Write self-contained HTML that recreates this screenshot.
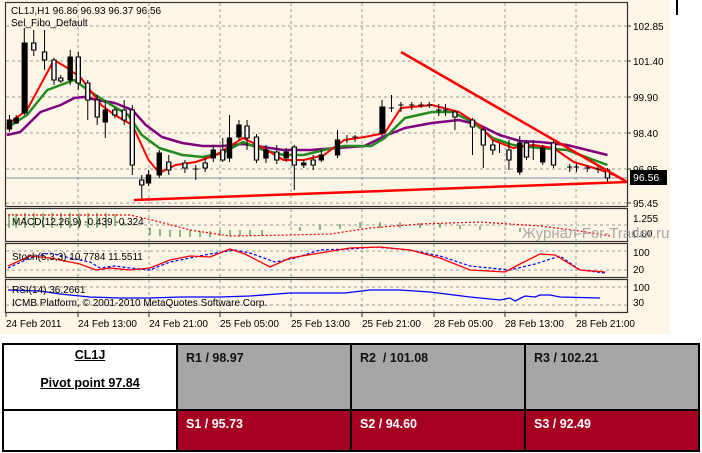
<!DOCTYPE html>
<html><head><meta charset="utf-8"><style>
body{margin:0;width:702px;height:453px;background:#fff;overflow:hidden;font-family:"Liberation Sans",sans-serif;position:relative}
svg{position:absolute;left:0;top:0}
table{position:absolute;left:2px;top:343px;width:698px;height:109px;border-collapse:collapse;table-layout:fixed}
td{border:2px solid #000;vertical-align:top;font-weight:bold;font-size:12.5px;padding:6px 8px}
.g{background:#a6a6a6;color:#111}
.r{background:#a50021;color:#fff}
</style></head><body>
<svg width="702" height="343" font-family="Liberation Sans, sans-serif" font-size="10">
<rect x="0" y="0" width="670" height="334" fill="#fdf5e6"/>
<rect x="676" y="0" width="2" height="15" fill="#000"/>
<g fill="none" stroke="#333" stroke-width="1.2">
<rect x="5.5" y="2.5" width="622" height="204"/>
<rect x="5.5" y="208.5" width="622" height="33"/>
<rect x="5.5" y="243.5" width="622" height="34"/>
<rect x="5.5" y="279.5" width="622" height="33"/>
</g>
<g stroke="#9a9a9a" stroke-dasharray="3,3" stroke-width="1">
<path d="M78 3V206M149 3V206M220 3V206M291 3V206M362 3V206M434 3V206M505 3V206M576 3V206"/>
<path d="M78 209V241M149 209V241M220 209V241M291 209V241M362 209V241M434 209V241M505 209V241M576 209V241"/>
<path d="M78 244V277M149 244V277M220 244V277M291 244V277M362 244V277M434 244V277M505 244V277M576 244V277"/>
<path d="M78 280V312M149 280V312M220 280V312M291 280V312M362 280V312M434 280V312M505 280V312M576 280V312"/>
<path d="M6 26H627M6 61H627M6 97H627M6 133H627M6 169H627M6 203H627"/>
<path d="M6 225H627M6 251H627M6 270H627M6 287H627M6 305H627"/>
</g>
<path d="M6 178H627" stroke="#7a8fa8" stroke-width="1"/>
<g stroke="#333"><path d="M627 26h4M627 61h4M627 97h4M627 133h4M627 169h4M627 203h4M6 313v4M78 313v4M149 313v4M220 313v4M291 313v4M362 313v4M434 313v4M505 313v4M576 313v4"/></g>
<g transform="scale(1.35,1)" fill="none" stroke-linejoin="round">
<polyline vector-effect="non-scaling-stroke" stroke="#800080" stroke-width="2.5" points="5,135 15,132 30,112 45,105 55,98 62,97 72,100 85,103 98,110 108,125 120,137 135,143 150,146 165,146 180,144 195,147 210,150 230,150 250,148 270,146 285,136 300,128 320,123 340,120 355,125 370,135 385,141 400,142 420,145 450,155"/>
<polyline vector-effect="non-scaling-stroke" stroke="#228b22" stroke-width="2.5" points="5,128 20,115 35,90 45,85 55,80 65,90 80,103 95,115 105,135 118,148 135,155 150,157 165,153 180,142 195,150 210,155 225,155 240,150 255,146 275,146 285,138 300,118 320,112 335,112 350,122 365,138 380,145 400,148 420,150 450,165"/>
<polyline vector-effect="non-scaling-stroke" stroke="#f00" stroke-width="2" points="5,125 20,110 40,60 50,68 60,78 75,105 85,115 98,125 110,160 118,173 130,165 145,162 160,155 180,138 195,148 210,160 225,160 240,155 255,140 270,137 285,133 297,108 320,105 340,112 355,125 365,140 380,148 395,145 410,148 425,162 445,170 455,175"/>
</g>
<g transform="scale(1.35,1)" stroke="#000" stroke-width="1" fill="#fff">
<path vector-effect="non-scaling-stroke" d="M7 115V132M12 115V124M18 28V115M25 30V56M33 30V70M40 58V85M45 75V83M52 50V85M58 52V90M65 80V120M72 95V125M78 100V138M85 108V118M92 100V125M98 105V175M105 175V200M110 170V186M118 150V178M125 155V175M137 160V173M145 165V180M152 158V172M158 145V162M165 138V162M170 115V162M177 120V140M183 120V150M190 134V163M197 145V163M205 145V164M212 148V162M218 145V190M225 160V168M232 155V170M238 150V162M250 130V158M257 135V143M263 135V142M283 100V136M290 95V112M297 102V112M305 102V110M312 102V108M318 102V108M325 104V116M330 104V116M337 110V130M350 118V155M358 128V168M365 140V155M370 143V153M377 140V170M385 136V175M390 140V160M395 140V160M402 145V165M410 140V168M422 164V172M427 163V172M435 165V172M443 166V173M450 168V183"/>
<g fill="#000">
<rect x="5.5" y="120" width="3" height="9"/><rect x="10.5" y="118" width="3" height="5"/><rect x="16.5" y="43" width="3.5" height="70"/>
<rect x="50.5" y="57" width="3" height="23"/><rect x="76.5" y="110" width="3" height="12"/><rect x="108.5" y="175" width="3" height="8"/><rect x="116.5" y="153" width="3" height="22"/>
<rect x="156.5" y="150" width="3" height="8"/><rect x="168.5" y="138" width="3" height="20"/><rect x="175.5" y="125" width="3" height="12"/><rect x="195.5" y="150" width="3" height="8"/><rect x="210.5" y="152" width="3" height="6"/><rect x="223.5" y="163" width="3" height="2"/><rect x="236.5" y="155" width="3" height="5"/><rect x="248.5" y="140" width="3" height="15"/><rect x="281.5" y="107" width="3.5" height="26"/><rect x="383.5" y="143" width="3" height="29"/><rect x="400.5" y="148" width="3" height="14"/>
</g>
<g fill="#fff">
<rect x="23.5" y="43" width="3" height="7"/><rect x="31.5" y="52" width="3" height="8"/><rect x="38.5" y="60" width="3" height="20"/><rect x="43.5" y="78" width="3" height="3"/><rect x="56.5" y="57" width="3" height="26"/><rect x="63.5" y="83" width="3" height="17"/><rect x="70.5" y="100" width="3" height="17"/><rect x="83.5" y="110" width="3" height="5"/><rect x="90.5" y="110" width="3" height="10"/><rect x="96.5" y="110" width="3" height="55"/><rect x="103.5" y="180" width="3" height="5"/><rect x="123.5" y="162" width="3" height="8"/><rect x="135.5" y="163" width="3" height="5"/><rect x="150.5" y="163" width="3" height="5"/><rect x="163.5" y="150" width="3" height="10"/><rect x="181.5" y="126" width="3" height="12"/><rect x="188.5" y="137" width="3" height="23"/><rect x="203.5" y="152" width="3" height="8"/><rect x="216.5" y="147" width="3" height="18"/><rect x="230.5" y="160" width="3" height="5"/><rect x="335.5" y="112" width="3" height="5"/><rect x="348.5" y="120" width="3" height="7"/><rect x="356.5" y="130" width="3" height="15"/><rect x="363.5" y="145" width="3" height="5"/><rect x="375.5" y="150" width="3" height="10"/><rect x="388.5" y="143" width="3" height="14"/><rect x="408.5" y="143" width="3" height="22"/><rect x="448.5" y="170" width="3" height="8"/>
</g>
<path vector-effect="non-scaling-stroke" d="M143 169h4M261 137h4M288 108h4M295 105h4M303 105h4M310 105h4M316 105h4M323 110h4M328 110h4M420 167h4M425 167h4M433 168h4M441 169h4"/>
</g>
<g stroke="#f00" stroke-width="2.5" fill="none">
<path d="M401 52L627 182"/><path d="M134 200L627 182"/>
</g>
<g fill="#000" font-size="10">
<text x="11" y="14">CL1J,H1  96.86 96.93 96.37 96.56</text>
<text x="11" y="26">Sel_Fibo_Default</text>
<text x="633" y="30">102.85</text><text x="633" y="65">101.40</text><text x="633" y="101">99.90</text><text x="633" y="137">98.40</text><text x="633" y="173">96.95</text><text x="633" y="207">95.45</text>
<text x="633" y="222">1.255</text><text x="633" y="237">0.00</text><text x="633" y="256">100</text><text x="633" y="273">20</text><text x="633" y="291">100</text><text x="633" y="306">30</text>
</g>
<rect x="630" y="170" width="37" height="15" fill="#000"/>
<text x="633" y="181" fill="#fff" font-size="10.5">96.56</text>
<g stroke="#1a7f1a" stroke-width="1"><path d="M9 214v14M16 214v14M25 213v15M34 213v15M43 213v15M52 213v15M61 213v15M70 213v15M79 213v15M88 213v15M97 213v15M106 213v15M115 214v12M124 222v4M150 228v7M160 229v7M170 230v7M180 230v7M190 230v7M200 231v6M210 231v6M220 230v6M230 230v6M240 230v6M250 230v6M262 230v6M300 231v-4M320 230v-5M340 229v-5M360 228v-6M380 228v-6M400 228v-6M420 228v-5M440 228v-5M460 229v-4M480 230v-4M520 232v-4"/></g>
<polyline fill="none" stroke="#f00" stroke-dasharray="2,2" stroke-width="1.2" points="8,215 130,215 160,222 190,230 230,236 290,235 330,234 370,228 420,224 480,222 540,226 580,231 610,236"/>
<text x="12" y="225" font-size="10" fill="#000">MACD(12,26,9) -0.439 -0.324</text>
<text x="522" y="238" font-size="15" fill="#a8a8a8">Журнал-For-Trader.ru</text>
<polyline fill="none" stroke="#00f" stroke-dasharray="3,2" stroke-width="1.2" points="8,268 30,258 50,253 70,258 90,262 100,268 115,266 130,268 150,270 170,262 190,258 210,254 235,250 250,253 275,262 295,258 320,250 350,249 375,247 410,250 440,256 470,266 510,270 535,264 560,256 580,270 605,273"/>
<polyline fill="none" stroke="#f00" stroke-width="1.3" points="8,266 30,256 50,258 70,262 80,264 96,270 110,268 130,270 150,268 170,260 190,256 210,257 230,249 245,254 270,267 290,258 320,253 350,248 380,247 410,250 440,258 470,270 505,272 520,264 540,254 555,255 580,270 605,272"/>
<text x="12" y="260" font-size="10" fill="#000">Stoch(5,3,3) 10.7784 11.5511</text>
<polyline fill="none" stroke="#00f" stroke-width="1.3" points="8,290 40,291 60,294 90,297 120,298 150,298 180,297 220,297 250,296 290,293 320,293 345,293 370,290 400,290 430,292 470,297 500,300 510,298 515,301 525,296 535,297 540,295 550,295 560,297 600,298"/>
<text x="12" y="293" font-size="10" fill="#000">RSI(14) 36.2661</text>
<text x="12" y="306" font-size="10" fill="#000">ICMB Platform, © 2001-2010 MetaQuotes Software Corp.</text>
<g font-size="10" fill="#000">
<text x="6" y="327">24 Feb 2011</text><text x="78" y="327">24 Feb 13:00</text><text x="149" y="327">24 Feb 21:00</text><text x="220" y="327">25 Feb 05:00</text><text x="291" y="327">25 Feb 13:00</text><text x="362" y="327">25 Feb 21:00</text><text x="434" y="327">28 Feb 05:00</text><text x="505" y="327">28 Feb 13:00</text><text x="576" y="327">28 Feb 21:00</text>
</g>
</svg>
<table>
<tr style="height:66px"><td style="text-align:center;background:#fff;padding-top:3px"><u>CL1J</u><br><div style="margin-top:14px"><u>Pivot point 97.84</u></div></td><td class="g">R1 / 98.97</td><td class="g">R2&nbsp; / 101.08</td><td class="g">R3 / 102.21</td></tr>
<tr><td style="background:#fff"></td><td class="r">S1 / 95.73</td><td class="r">S2 / 94.60</td><td class="r">S3 / 92.49</td></tr>
</table>
</body></html>
